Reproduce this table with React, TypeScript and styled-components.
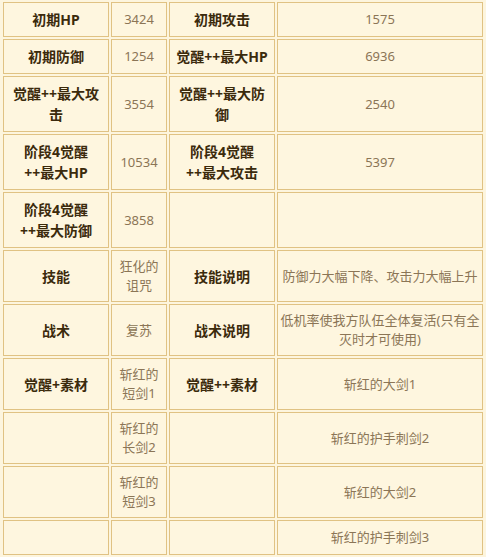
import React from 'react'
import styled, { createGlobalStyle } from 'styled-components'

type Kind = 'label' | 'value'

interface CellData {
  kind: Kind
  lines: string[]
}

const L = (...lines: string[]): CellData => ({ kind: 'label', lines })
const V = (...lines: string[]): CellData => ({ kind: 'value', lines })
const E: CellData = { kind: 'value', lines: [] }

const rows: CellData[][] = [
  [L('初期HP'), V('3424'), L('初期攻击'), V('1575')],
  [L('初期防御'), V('1254'), L('觉醒++最大HP'), V('6936')],
  [L('觉醒++最大攻', '击'), V('3554'), L('觉醒++最大防', '御'), V('2540')],
  [L('阶段4觉醒', '++最大HP'), V('10534'), L('阶段4觉醒', '++最大攻击'), V('5397')],
  [L('阶段4觉醒', '++最大防御'), V('3858'), E, E],
  [L('技能'), V('狂化的', '诅咒'), L('技能说明'), V('防御力大幅下降、攻击力大幅上升')],
  [L('战术'), V('复苏'), L('战术说明'), V('低机率使我方队伍全体复活(只有全', '灭时才可使用)')],
  [L('觉醒+素材'), V('斩红的', '短剑1'), L('觉醒++素材'), V('斩红的大剑1')],
  [E, V('斩红的', '长剑2'), E, V('斩红的护手刺剑2')],
  [E, V('斩红的', '短剑3'), E, V('斩红的大剑2')],
  [E, E, E, V('斩红的护手刺剑3')],
]

const columns = [106, 56, 106, 206]

const GlobalStyle = createGlobalStyle`
  body {
    margin: 0;
    background: #fdf5de;
    font-family: "Noto Sans", "Noto Sans CJK SC", sans-serif;
  }
`

const StatTable = styled.table`
  table-layout: fixed;
  width: 484px;
  margin-left: 1px;
  border-collapse: separate;
  border-spacing: 2px;
  background: #fdf5de;
`

const Cell = styled.td<{ $kind: Kind }>`
  box-sizing: content-box;
  height: 21px;
  padding: 6px 2px;
  border: 1px solid #e0c283;
  background: #fef6df;
  text-align: center;
  vertical-align: middle;
  white-space: nowrap;
  font-family: "Noto Sans", "Noto Sans CJK SC", sans-serif;
  font-size: ${(props) => (props.$kind === 'label' ? '14px' : '13px')};
  font-weight: ${(props) => (props.$kind === 'label' ? 700 : 400)};
  line-height: ${(props) => (props.$kind === 'label' ? '21px' : '19px')};
  color: ${(props) => (props.$kind === 'label' ? '#3b2a0c' : '#8b7556')};
`

const App: React.FC = () => {
  return (
    <>
      <GlobalStyle />
      <StatTable>
        <colgroup>
          {columns.map((w, i) => (
            <col key={i} style={{ width: w }} />
          ))}
        </colgroup>
        <tbody>
          {rows.map((row, r) => (
            <tr key={r}>
              {row.map((cell, c) => (
                <Cell key={c} $kind={cell.kind}>
                  {cell.lines.map((line, i) => (
                    <React.Fragment key={i}>
                      {i > 0 && <br />}
                      {line}
                    </React.Fragment>
                  ))}
                </Cell>
              ))}
            </tr>
          ))}
        </tbody>
      </StatTable>
    </>
  )
}

export default App
